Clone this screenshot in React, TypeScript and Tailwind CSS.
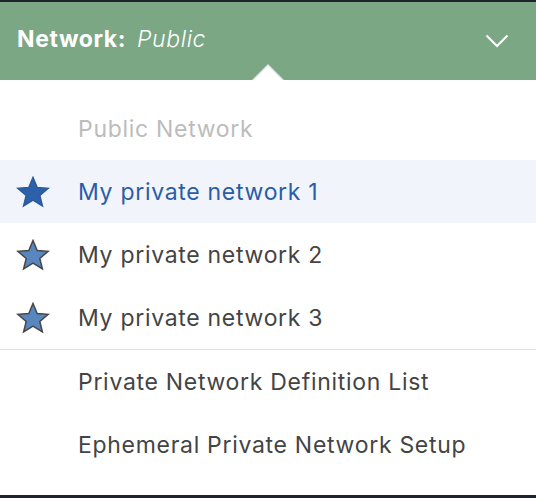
const font = { fontFamily: "Inter, 'Noto Sans', sans-serif" };

function Star({ active }: { active?: boolean }) {
  return (
    <svg width="34" height="32" viewBox="0 0 34 32" className="shrink-0">
      <polygon
        points="17,1.5 21.2,11.6 32.2,12.3 23.8,19.4 26.4,30 17,24.2 7.6,30 10.2,19.4 1.8,12.3 12.8,11.6"
        fill={active ? "#2c61a9" : "#5887bf"}
        stroke={active ? "#2a5a9c" : "#474747"}
        strokeWidth="1.5"
        strokeLinejoin="miter"
      />
    </svg>
  );
}

const networks = ["My private network 1", "My private network 2", "My private network 3"];
const links = ["Private Network Definition List", "Ephemeral Private Network Setup"];

export default function App() {
  return (
    <div className="w-[536px] h-[498px] bg-[#1e2330] pt-[2px] pb-[3px] flex flex-col" style={font}>
      <header className="relative h-[78px] shrink-0 bg-[#7ba784] flex items-center justify-between pl-[17px] pr-[27px] text-white">
        <div className="text-[23px] tracking-[0.6px] -mt-[3px]">
          <span className="font-bold">Network:</span>
          <span className="italic font-light ml-[11px]">Public</span>
        </div>
        <svg width="24" height="14" viewBox="0 0 24 14">
          <polyline points="1.5,1.5 12,12 22.5,1.5" fill="none" stroke="white" strokeWidth="2" />
        </svg>
        <div className="absolute left-[252px] bottom-0 w-0 h-0 border-l-[16px] border-r-[16px] border-b-[16px] border-l-transparent border-r-transparent border-b-[#e4e6ea]" />
        <div className="absolute left-[254px] bottom-0 w-0 h-0 border-l-[14px] border-r-[14px] border-b-[14px] border-l-transparent border-r-transparent border-b-white" />
      </header>
      <div className="flex-1 bg-white pt-[17px] flex flex-col text-[23px] tracking-[0.7px]">
        <div className="h-[63px] flex items-center pl-[78px] pt-[2px] text-[#bcbcbc]">Public Network</div>
        {networks.map((n, i) => (
          <div
            key={n}
            className={
              i === 0
                ? "h-[63px] flex items-center pl-[16px] gap-[28px] bg-[#f1f4fa] text-[#2a5ca8]"
                : "h-[63px] flex items-center pl-[16px] gap-[28px] text-[#444]"
            }
          >
            <Star active={i === 0} />
            <span className="pt-[2px]">{n}</span>
          </div>
        ))}
        <div className="h-px bg-[#e2e2e2]" />
        {links.map((l) => (
          <div key={l} className="h-[63px] flex items-center pl-[78px] pt-[2px] text-[#444]">
            {l}
          </div>
        ))}
      </div>
    </div>
  );
}
